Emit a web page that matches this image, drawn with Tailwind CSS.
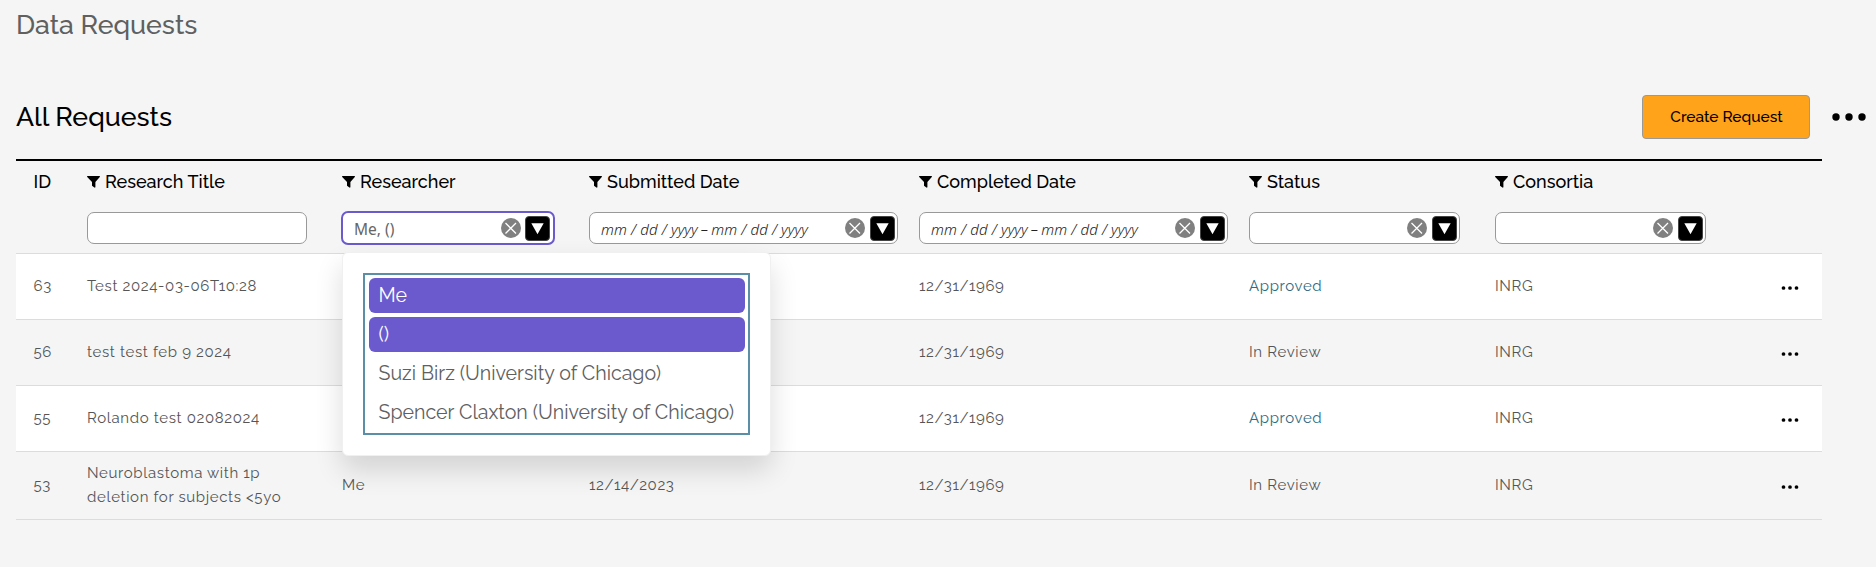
<!DOCTYPE html>
<html lang="en">
<head>
<meta charset="utf-8">
<title>Data Requests</title>
<script src="https://cdn.jsdelivr.net/npm/@tailwindcss/browser@4"></script>
</head>
<body class="min-h-screen bg-[#f5f5f5] font-[Raleway,Lato,sans-serif] text-black">
<svg class="hidden">
  <symbol id="funnel" viewBox="0 0 13 12"><path d="M.7 0h11.6c.7 0 .9.7.5 1.1L8.4 6v5c0 .6-.6.8-1 .5L5 9.700V6L.2 1.100C-.2.7 0 0 .7 0Z"/></symbol>
  <symbol id="clear" viewBox="0 0 20 20"><circle cx="10" cy="10" r="10" fill="#808080"/><path d="M4.500 5 15 15.500M15 5 4.500 15.500" stroke="#fff" stroke-width="1.300"/></symbol>
  <symbol id="down" viewBox="0 0 25 25"><rect x=".5" y=".5" width="24" height="24" rx="3.500" stroke="#444"/><path d="M6.300 7.300h12.400L12.500 18.300Z" fill="#fff"/></symbol>
  <symbol id="dots" viewBox="0 0 34 8"><circle cx="4" cy="4" r="3.700"/><circle cx="17" cy="4" r="3.700"/><circle cx="30" cy="4" r="3.700"/></symbol>
</svg>
<main class="pl-4">
  <h1 class="h-[95px] pt-[9px] text-[26.700px] leading-8 font-medium text-[#606060]">Data Requests</h1>
  <div class="flex h-16 items-start pr-[10px]">
    <h2 class="flex-1 pt-[6px] text-[26.700px] leading-8 font-medium">All Requests</h2>
    <button class="h-[44px] w-[168px] rounded border border-[#999] bg-[#ffa31a] pl-px text-[15.500px] font-medium">Create Request</button>
    <svg class="mt-[18px] ml-[22px] h-2 w-[34px]"><use href="#dots"/></svg>
  </div>
  <section class="w-[1806px] border-t-2 border-black">
    <div class="grid h-[93px] grid-cols-[71px_255px_247px_330px_330px_246px_246px_81px] border-b border-[#dcdcdc] pt-[9px] text-[18px] leading-6 font-medium">
      <div class="pl-[17.500px]">ID</div>
      <div>
        <div class="flex items-center gap-[5px]"><svg class="h-3 w-[13px]"><use href="#funnel"/></svg>Research Title</div>
        <div class="mt-[18px] h-8 w-[220px] rounded-[7px] border border-[#999] bg-white"></div>
      </div>
      <div>
        <div class="flex items-center gap-[5px]"><svg class="h-3 w-[13px]"><use href="#funnel"/></svg>Researcher</div>
        <div class="mt-[17px] -ml-px flex h-[34px] w-[214px] items-center rounded-[7px] border-2 border-[#6a5acd] bg-white pr-[3px] pl-[11px]">
          <span class="flex-1 pt-[2px] font-['Noto_Sans',sans-serif] text-[15.500px] font-normal text-[#666]">Me, ()</span>
          <svg class="h-5 w-5"><use href="#clear"/></svg><svg class="ml-1 h-[25px] w-[25px]"><use href="#down"/></svg>
        </div>
      </div>
      <div>
        <div class="flex items-center gap-[5px]"><svg class="h-3 w-[13px]"><use href="#funnel"/></svg>Submitted Date</div>
        <div class="mt-[18px] flex h-8 w-[309px] items-center rounded-[7px] border border-[#999] bg-white pr-[2px] pl-[11px]">
          <span class="flex-1 pt-[2px] font-['Noto_Sans',sans-serif] text-[15px] font-light tracking-[0.14px] text-[#222] italic">mm / dd / yyyy<span class="mx-[3px]">–</span>mm / dd / yyyy</span>
          <svg class="h-5 w-5"><use href="#clear"/></svg><svg class="ml-[5px] h-[25px] w-[25px]"><use href="#down"/></svg>
        </div>
      </div>
      <div>
        <div class="flex items-center gap-[5px]"><svg class="h-3 w-[13px]"><use href="#funnel"/></svg>Completed Date</div>
        <div class="mt-[18px] flex h-8 w-[309px] items-center rounded-[7px] border border-[#999] bg-white pr-[2px] pl-[11px]">
          <span class="flex-1 pt-[2px] font-['Noto_Sans',sans-serif] text-[15px] font-light tracking-[0.14px] text-[#222] italic">mm / dd / yyyy<span class="mx-[3px]">–</span>mm / dd / yyyy</span>
          <svg class="h-5 w-5"><use href="#clear"/></svg><svg class="ml-[5px] h-[25px] w-[25px]"><use href="#down"/></svg>
        </div>
      </div>
      <div>
        <div class="flex items-center gap-[5px]"><svg class="h-3 w-[13px]"><use href="#funnel"/></svg>Status</div>
        <div class="mt-[18px] flex h-8 w-[211px] items-center justify-end rounded-[7px] border border-[#999] bg-white pr-[2px]">
          <svg class="h-5 w-5"><use href="#clear"/></svg><svg class="ml-[5px] h-[25px] w-[25px]"><use href="#down"/></svg>
        </div>
      </div>
      <div>
        <div class="flex items-center gap-[5px]"><svg class="h-3 w-[13px]"><use href="#funnel"/></svg>Consortia</div>
        <div class="mt-[18px] flex h-8 w-[211px] items-center justify-end rounded-[7px] border border-[#999] bg-white pr-[2px]">
          <svg class="h-5 w-5"><use href="#clear"/></svg><svg class="ml-[5px] h-[25px] w-[25px]"><use href="#down"/></svg>
        </div>
      </div>
    </div>
    <div class="relative text-[15px] leading-6 font-[370] tracking-[0.640px] text-[#555]">
      <div class="grid h-[66px] grid-cols-[71px_255px_247px_330px_330px_246px_246px_81px] items-center border-b border-[#dcdcdc] bg-white pb-[2px]">
        <div class="pl-[17.500px]">63</div><div>Test 2024-03-06T10:28</div><div></div><div></div><div>12/31/1969</div><div class="text-[#2f6a80]">Approved</div><div>INRG</div><svg class="mt-[5px] ml-[40px] h-1 w-[18px] fill-black"><use href="#dots"/></svg>
      </div>
      <div class="grid h-[66px] grid-cols-[71px_255px_247px_330px_330px_246px_246px_81px] items-center border-b border-[#dcdcdc] pb-[2px]">
        <div class="pl-[17.500px]">56</div><div>test test feb 9 2024</div><div></div><div></div><div>12/31/1969</div><div>In Review</div><div>INRG</div><svg class="mt-[5px] ml-[40px] h-1 w-[18px] fill-black"><use href="#dots"/></svg>
      </div>
      <div class="grid h-[66px] grid-cols-[71px_255px_247px_330px_330px_246px_246px_81px] items-center border-b border-[#dcdcdc] bg-white pb-[2px]">
        <div class="pl-[17.500px]">55</div><div>Rolando test 02082024</div><div></div><div></div><div>12/31/1969</div><div class="text-[#2f6a80]">Approved</div><div>INRG</div><svg class="mt-[5px] ml-[40px] h-1 w-[18px] fill-black"><use href="#dots"/></svg>
      </div>
      <div class="grid h-[68px] grid-cols-[71px_255px_247px_330px_330px_246px_246px_81px] items-center border-b border-[#dcdcdc] pb-[2px]">
        <div class="pl-[17.500px]">53</div><div>Neuroblastoma with 1p<br>deletion for subjects &lt;5yo</div><div>Me</div><div>12/14/2023</div><div>12/31/1969</div><div>In Review</div><div>INRG</div><svg class="mt-[5px] ml-[40px] h-1 w-[18px] fill-black"><use href="#dots"/></svg>
      </div>
      <div class="absolute -top-[2px] left-[326px] h-[204px] w-[429px] rounded-md border border-[#f0f0f0] bg-white px-[20px] pt-[20px] shadow-[0_14px_28px_rgba(0,0,0,0.14)]">
        <div class="flex h-[162px] w-[387px] flex-col gap-1 border-2 border-[#5b8fa8] pr-[3px] pl-1 pt-[3px] text-[19.600px] leading-[35px] font-normal tracking-normal text-[#606060]">
          <div class="h-[35px] rounded-md bg-[#6a5acd] px-[9.500px] text-white">Me</div>
          <div class="h-[35px] rounded-md bg-[#6a5acd] px-[9.500px] text-white">()</div>
          <div class="h-[35px] px-[9.500px] whitespace-nowrap">Suzi Birz (University of Chicago)</div>
          <div class="h-[35px] px-[9.500px] whitespace-nowrap">Spencer Claxton (University of Chicago)</div>
        </div>
      </div>
    </div>
  </section>
</main>
</body>
</html>
